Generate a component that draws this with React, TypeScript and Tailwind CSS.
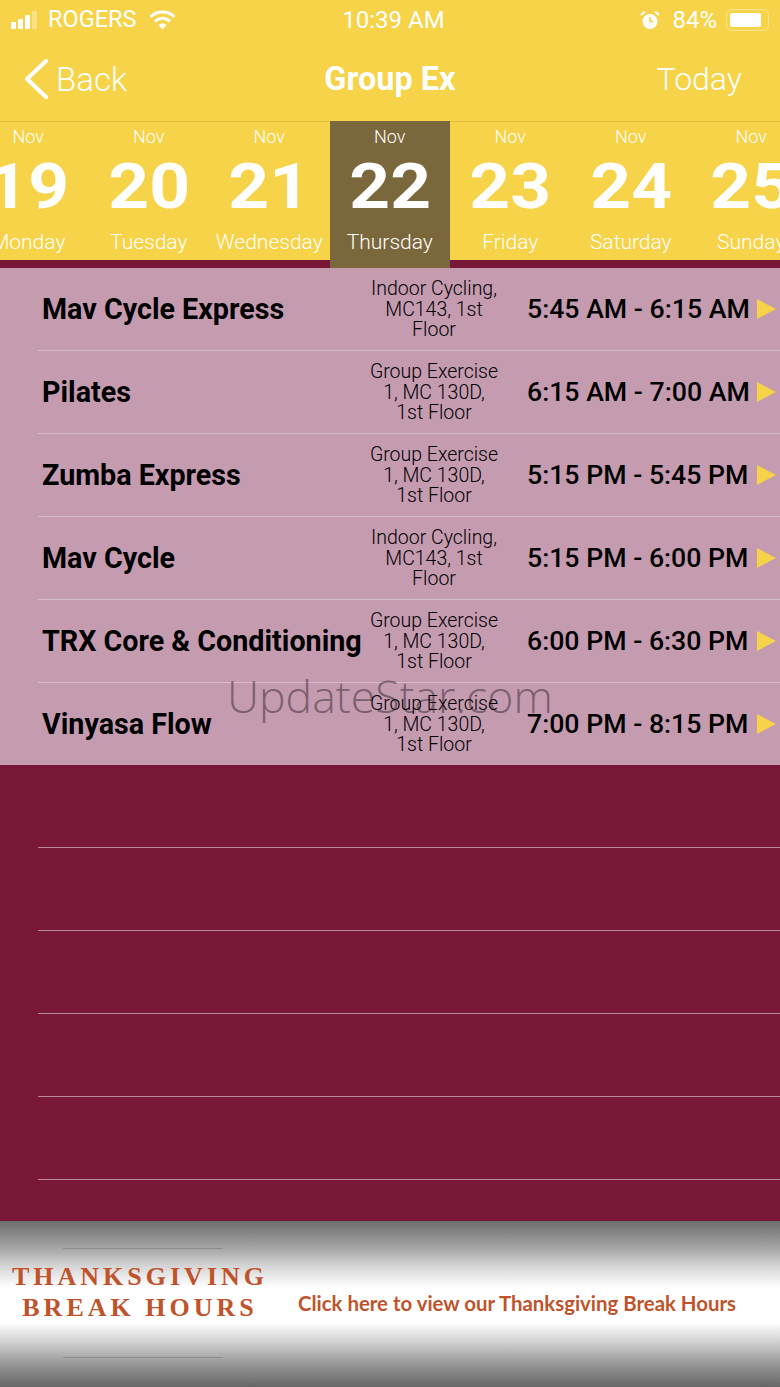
import React from 'react';

const days = [
  { num: '19', name: 'Monday' },
  { num: '20', name: 'Tuesday' },
  { num: '21', name: 'Wednesday' },
  { num: '22', name: 'Thursday', active: true },
  { num: '23', name: 'Friday' },
  { num: '24', name: 'Saturday' },
  { num: '25', name: 'Sunday' },
];

const classes = [
  { name: 'Mav Cycle Express', place: ['Indoor Cycling,', 'MC143, 1st', 'Floor'], time: '5:45 AM - 6:15 AM' },
  { name: 'Pilates', place: ['Group Exercise', '1, MC 130D,', '1st Floor'], time: '6:15 AM - 7:00 AM' },
  { name: 'Zumba Express', place: ['Group Exercise', '1, MC 130D,', '1st Floor'], time: '5:15 PM - 5:45 PM' },
  { name: 'Mav Cycle', place: ['Indoor Cycling,', 'MC143, 1st', 'Floor'], time: '5:15 PM - 6:00 PM' },
  { name: 'TRX Core & Conditioning', place: ['Group Exercise', '1, MC 130D,', '1st Floor'], time: '6:00 PM - 6:30 PM' },
  { name: 'Vinyasa Flow', place: ['Group Exercise', '1, MC 130D,', '1st Floor'], time: '7:00 PM - 8:15 PM' },
];

const StatusBar = () => (
  <div className="h-[40px] grid grid-cols-3 items-center pl-[11px] pr-[11px] text-white text-[23.5px] leading-none">
    <div className="flex items-center">
      <svg width="27" height="18" viewBox="0 0 27 18" fill="white">
        <rect x="0" y="11" width="5" height="7" rx="1" />
        <rect x="7" y="8" width="5" height="10" rx="1" />
        <rect x="14" y="4" width="5" height="14" rx="1" />
        <rect x="21" y="0" width="5" height="18" rx="1" opacity="0.35" />
      </svg>
      <span className="ml-[10px]">ROGERS</span>
      <svg className="ml-[13px]" width="27" height="20" viewBox="0 0 27 20" fill="none" stroke="white" strokeWidth="3">
        <path d="M1.5 7 A17 17 0 0 1 25.5 7" />
        <path d="M6 11.5 A10.5 10.5 0 0 1 21 11.5" />
        <path d="M13.5 19.5 L9.5 15 A5.5 5.5 0 0 1 17.5 15 Z" fill="white" stroke="none" />
      </svg>
    </div>
    <span className="text-center pl-[7px] text-[24px] whitespace-nowrap">10:39 AM</span>
    <div className="flex items-center justify-end">
      <svg width="20" height="20" viewBox="0 0 20 20" fill="white">
        <circle cx="10" cy="11.5" r="7.5" />
        <path d="M10 7 V11.5 H13.5" stroke="#f6d348" strokeWidth="1.6" fill="none" />
        <path d="M1 5 L5 1.5 M19 5 L15 1.5" stroke="white" strokeWidth="2.2" />
      </svg>
      <span className="ml-[12px] text-[24px] mr-[1px]">84%</span>
      <div className="ml-[8px] w-[43px] h-[22px] rounded-[6px] border border-white/40 p-[3px] flex">
        <div className="w-[31px] bg-white rounded-[2px]" />
      </div>
    </div>
  </div>
);

export default function App() {
  return (
    <div className="w-[780px] h-[1387px] overflow-hidden relative flex flex-col bg-[#781736] font-['Roboto',sans-serif]">
      <div className="bg-[#f6d348]">
        <StatusBar />
        <div className="h-[81px] grid grid-cols-3 items-center text-white pb-[3px]">
          <div className="flex items-center pl-[24px]">
            <svg width="25" height="40" viewBox="0 0 25 40" fill="none" stroke="white" strokeWidth="4" strokeLinecap="round" strokeLinejoin="round">
              <path d="M22 2 L3 20 L22 38" />
            </svg>
            <span className="ml-[7px] text-[33px] font-light leading-none">Back</span>
          </div>
          <span className="text-center text-[32.5px] font-bold leading-none">Group Ex</span>
          <span className="text-right text-[32px] font-light leading-none pr-[38px]">Today</span>
        </div>
      </div>

      <div className="h-[147px] shrink-0 relative">
        <div className="absolute inset-x-0 top-0 h-[139px] bg-[#f6d348] border-t border-[#e2be3f]" />
        <div className="relative flex -ml-[32px] w-[844px] h-full">
          {days.map((d) => (
            <div
              key={d.num}
              className={`w-[120.5px] shrink-0 flex flex-col items-center text-white ${d.active ? 'bg-[#7b673c]' : ''}`}
            >
              <span className="mt-[6px] text-[18px] font-light leading-[20px]">Nov</span>
              <span className="mt-[9px] text-[63px] font-bold leading-[62px] scale-x-[1.13]">{d.num}</span>
              <span className="mt-[12px] text-[21px] font-light leading-[24px] whitespace-nowrap">{d.name}</span>
            </div>
          ))}
        </div>
      </div>

      <div className="bg-[#c59bb0]">
        {classes.map((c, i) => (
          <div
            key={c.name}
            className={`ml-[38px] flex items-center text-black ${i < classes.length - 1 ? 'h-[83px] border-b border-[#d6bcc8]' : 'h-[82px]'}`}
          >
            <div className="w-[326px] pl-[4px] text-[28.7px] font-bold leading-none whitespace-nowrap">{c.name}</div>
            <div className="w-[140px] pt-[2px] text-center text-[19.5px] font-light leading-[20.7px]">
              {c.place.map((line) => (
                <div key={line}>{line}</div>
              ))}
            </div>
            <div className="ml-[23px] w-[222px] text-[26.7px] font-medium leading-none whitespace-nowrap">{c.time}</div>
            <svg className="ml-[8px]" width="19" height="20" viewBox="0 0 19 20" fill="#f6d348">
              <path d="M0 0 L19 10 L0 20 Z" />
            </svg>
          </div>
        ))}
      </div>

      <div className="flex-1">
        {[0, 1, 2, 3, 4].map((n) => (
          <div key={n} className="ml-[38px] h-[83px] border-b border-[#b98a9f]" />
        ))}
      </div>

      <div className="h-[166px] shrink-0 flex items-center bg-[linear-gradient(to_bottom,#6d6d6d_0%,#a8a8a8_17%,#d8d8d8_28%,#ffffff_40%,#ffffff_61%,#d0d0d0_73%,#909090_88%,#666666_100%)]">
        <div className="w-[280px] mb-[2px] flex flex-col items-center">
          <div className="w-[160px] h-px bg-[#8c8c8c] ml-[6px]" />
          <div className="mt-[12px] font-['Liberation_Serif',serif] text-[#c0532a] font-bold text-[26px] leading-[31px] tracking-[4px] text-center whitespace-nowrap">
            <div>THANKSGIVING</div>
            <div>BREAK HOURS</div>
          </div>
          <div className="mt-[34px] w-[160px] h-px bg-[#8c8c8c] ml-[6px]" />
        </div>
        <span className="ml-[18px] mb-[2px] font-['Lato',sans-serif] font-bold text-[#c0532a] text-[20.4px] whitespace-nowrap">
          Click here to view our Thanksgiving Break Hours
        </span>
      </div>

      <div className="absolute left-[227px] top-[666px] text-[44.6px] leading-[60px] text-black/40 font-['Open_Sans',sans-serif] font-light whitespace-nowrap">
        UpdateStar.com
      </div>
    </div>
  );
}
